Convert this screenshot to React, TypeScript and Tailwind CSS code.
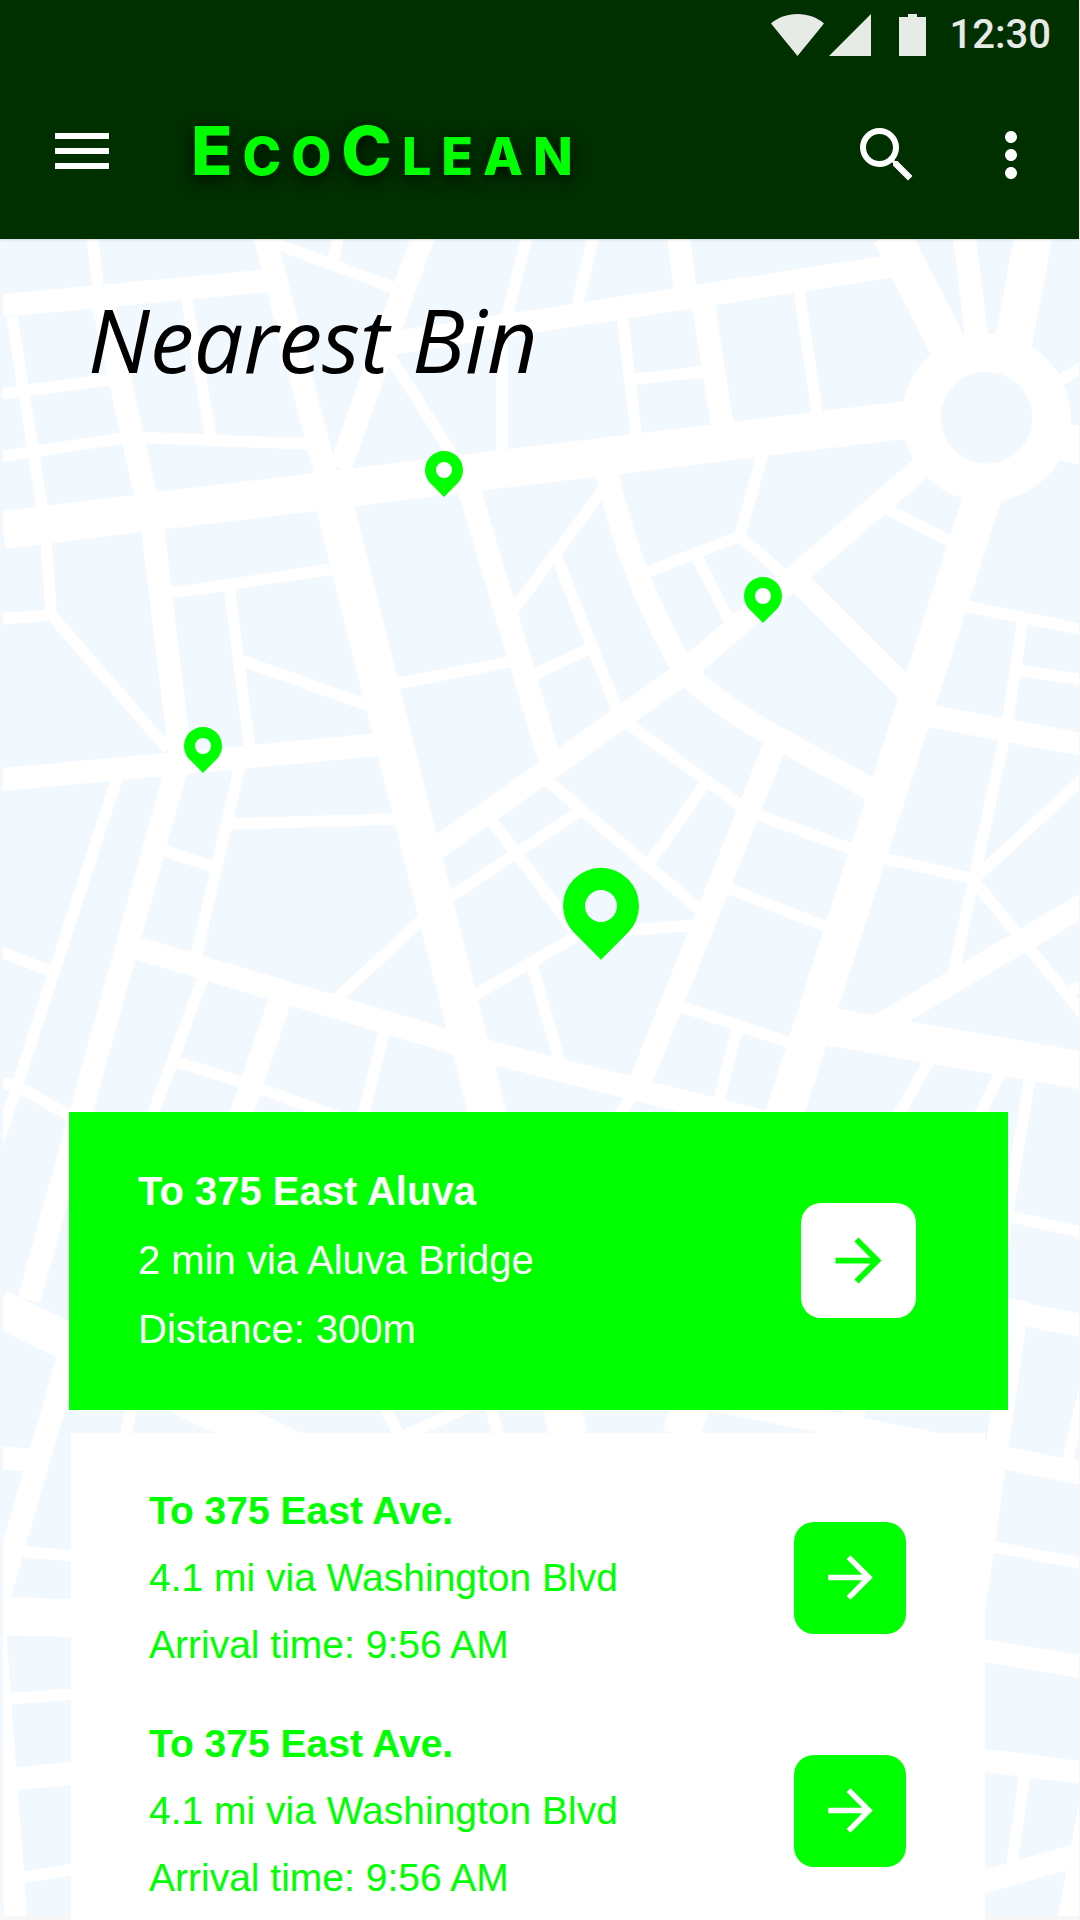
import { MdArrowForward, MdMenu, MdMoreVert, MdSearch } from "react-icons/md";

const wideRoads = [
  "M3 530L905 420L986 410",
  "M986 428L1085 446",
  "M331 490L336 511L487 1112L569 1436",
  "M891 234L950 350L986 417",
  "M1034 234L1012 350L986 417",
  "M988 480L681 1436",
  "M820 1025L1085 1071",
  "M-2 1308L310 1458",
  "M-5 1616L75 1618",
];

const mediumRoads = [
  "M-2 306L275 280",
  "M264 234L312 420L331 495",
  "M100 290L150 515L153 531L180 755L29 1300",
  "M69 1355L-1 1597",
  "M-3 1458L38 1460",
  "M-6 1590L-5 1636L16 1920",
  "M5 1780L75 1773",
  "M424 234L340 468",
  "M380 345L900 265",
  "M678 234L686 297",
  "M702 295L723 430",
  "M964 234L980 365",
  "M-2 780L385 744",
  "M130 946L449 1041L540 1065L800 1131",
  "M282 994L238 1124",
  "M430 853L680 676L700 658L935 456",
  "M465 475L552 768",
  "M606 466L610 486Q634 585 684 670Q705 695 763 730L876 792",
  "M800 583L908 691",
  "M920 714L1085 745",
  "M1088 902L870 1031",
  "M777 740L638 1088",
  "M1000 1310L1085 1326",
  "M1018 1300L973 1616",
  "M700 1397L1085 1474",
  "M855 1400L851 1430",
  "M980 1650L1085 1667",
  "M980 1760L1085 1773",
  "M980 1883L1088 1852",
  "M1094 1785L1069 1920",
];

const thinRoads = [
  "M92 234L99 295",
  "M12 317L42 507",
  "M44 510L51 613",
  "M-2 619L51 615L168 749",
  "M-2 394L115 379",
  "M-2 457L130 437L310 444",
  "M186 295L211 437",
  "M258 237L400 290",
  "M339 234L332 265",
  "M528 234L506 320",
  "M502 335L502 460",
  "M594 234L577 306",
  "M390 357L458 463",
  "M622 313L637 442",
  "M628 380L710 371",
  "M798 285L818 418",
  "M1050 386L1085 366",
  "M165 594L340 568",
  "M229 585L250 750",
  "M240 660L370 706",
  "M118 775L19 1080L-5 1152",
  "M-2 951L50 971",
  "M-2 1083L16 1085L75 1119",
  "M240 765L196 957",
  "M229 824L400 819",
  "M162 850L214 867",
  "M204 975L151 1119",
  "M174 1061L245 1083L338 1117",
  "M385 1029L362 1120",
  "M425 917L335 1000",
  "M395 684L514 661",
  "M603 490L511 613",
  "M556 555L618 712",
  "M591 648L531 676",
  "M763 452L740 536L645 573",
  "M740 536L786 577",
  "M696 555L731 624",
  "M885 508L954 543",
  "M960 605L1085 630",
  "M1023 618L1007 725L974 879L953 974",
  "M1016 670L1085 680",
  "M878 857L974 879L1085 777",
  "M974 881L1030 949L1085 1016",
  "M1068 992L1085 984",
  "M750 812L857 851",
  "M722 886L832 929",
  "M676 1005L794 1044",
  "M738 1027L718 1104",
  "M634 1092L616 1121",
  "M624 721L747 810",
  "M705 784L648 865",
  "M543 777L705 914",
  "M489 817L580 938",
  "M446 900L582 810",
  "M470 998L580 934L697 925",
  "M532 965L560 1062",
  "M932 1056L895 1121",
  "M1001 1071L977 1120",
  "M1030 1077L1000 1260",
  "M1000 1214L1085 1233",
  "M1087 1379L1067 1463",
  "M132 1405L125 1438",
  "M382 1401L400 1438L472 1405",
  "M490 1405L499 1438",
  "M15 1551L75 1556",
  "M5 1699L75 1694",
  "M15 1879L75 1869",
  "M983 1545L1085 1564",
  "M1025 1773L1011 1870",
];

const pins = [
  { x: 444, y: 470, scale: 1 },
  { x: 763, y: 596, scale: 1 },
  { x: 203, y: 746, scale: 1 },
  { x: 601, y: 906, scale: 2 },
];

function CityMap() {
  return (
    <svg
      className="absolute inset-0 h-full w-full"
      viewBox="0 239 1079 1681"
      preserveAspectRatio="xMidYMin slice"
      role="img"
      aria-label="Map of nearby bins"
    >
      <clipPath id="street-area">
        <rect x="3" y="230" width="1076" height="1686" />
      </clipPath>
      <rect x="0" y="230" width="1078" height="1686" fill="#f1f8fe" />
      <g clipPath="url(#street-area)" fill="none" stroke="#ffffff" strokeLinejoin="round">
        <path d={wideRoads.join("")} strokeWidth="38" />
        <path d={mediumRoads.join("")} strokeWidth="23" />
        <path d={thinRoads.join("")} strokeWidth="11.5" />
        <circle cx="986.5" cy="417.7" r="65" fill="#f1f8fe" strokeWidth="38.5" />
      </g>
      {pins.map((pin) => (
        <path
          key={`${pin.x}-${pin.y}`}
          transform={`translate(${pin.x} ${pin.y}) scale(${pin.scale})`}
          fill="#00ff00"
          fillRule="evenodd"
          d="M-13.4 13.4L0 26.9L13.4 13.4A19 19 0 1 0 -13.4 13.4ZM0 -8A8 8 0 1 1 0 8A8 8 0 1 1 0 -8Z"
        />
      ))}
    </svg>
  );
}

function StatusBar() {
  return (
    <div className="flex h-[70px] items-center justify-end pr-7 text-[#e6ebe6]">
      <svg className="h-[42px] w-[53px]" viewBox="0 0 53 42" fill="currentColor" aria-hidden="true">
        <path d="M26.5 42L0 9.5C7 3.500 16 0 26.500 0S46 3.500 53 9.500Z" />
      </svg>
      <svg className="ml-[5px] h-[42px] w-[42px]" viewBox="0 0 42 42" fill="currentColor" aria-hidden="true">
        <path d="M42 0V42H0Z" />
      </svg>
      <svg className="ml-7 h-[42px] w-[27px]" viewBox="0 0 27 42" fill="currentColor" aria-hidden="true">
        <path d="M9 0H18V3H27V42H0V3H9Z" />
      </svg>
      <time className="ml-6 font-['Roboto',sans-serif] text-[40px] leading-[48px] font-medium">12:30</time>
    </div>
  );
}

function Header() {
  return (
    <header className="relative z-10 bg-[#002f00] pb-[7px] shadow-sm">
      <StatusBar />
      <div className="flex h-[162px] items-center pr-8 pl-[46px] text-white">
        <button type="button" aria-label="Menu">
          <MdMenu className="size-[72px]" />
        </button>
        <h1 className="ml-[73px] flex-1 pt-1 font-['Inter',sans-serif] text-[68px] leading-[80px] font-extrabold tracking-[10px] text-[#00ff00] [text-shadow:0_4px_16px_rgb(0_0_0/0.8)]">
          E<span className="text-[52px]">CO</span>C<span className="text-[52px]">LEAN</span>
        </h1>
        <div className="flex gap-[52px] pt-2">
          <button type="button" aria-label="Search">
            <MdSearch className="size-[72px]" />
          </button>
          <button type="button" aria-label="More options">
            <MdMoreVert className="size-[72px]" />
          </button>
        </div>
      </div>
    </header>
  );
}

const routes = [
  { id: 1, title: "To 375 East Ave.", via: "4.1 mi via Washington Blvd", detail: "Arrival time: 9:56 AM" },
  { id: 2, title: "To 375 East Ave.", via: "4.1 mi via Washington Blvd", detail: "Arrival time: 9:56 AM" },
];

export default function App() {
  return (
    <div className="flex min-h-screen flex-col bg-[#f7f7f7] pr-px font-['Liberation_Sans',Arial,sans-serif]">
      <Header />
      <main className="relative flex flex-1 flex-col">
        <CityMap />
        <div className="relative min-h-[873px] pt-[48px] pl-[88px]">
          <h2 className="font-['Open_Sans',sans-serif] text-[88px] leading-[104px] font-medium text-black italic">Nearest Bin</h2>
        </div>

        <section className="relative mr-[71px] ml-[69px] flex items-center justify-between bg-[#00ff00] pt-[45px] pr-[92px] pb-[46px] pl-[69px] text-[40px] leading-[69px] text-white">
          <div>
            <h3 className="font-bold">To 375 East Aluva</h3>
            <p>2 min via Aluva Bridge</p>
            <p>Distance: 300m</p>
          </div>
          <button
            type="button"
            aria-label="Go to 375 East Aluva"
            className="flex size-[115px] items-center justify-center rounded-[20px] bg-white text-[#00ff00]"
          >
            <MdArrowForward className="size-[69px]" />
          </button>
        </section>

        <ul className="relative mt-[23px] mr-[94px] ml-[71px] flex flex-1 flex-col gap-8 bg-white pt-[44px] pr-[79px] pb-[8px] pl-[78px] text-[39px] leading-[67px] text-[#00ff00]">
          {routes.map((route) => (
            <li key={route.id} className="flex items-center justify-between">
              <div>
                <h3 className="font-bold">{route.title}</h3>
                <p>{route.via}</p>
                <p>{route.detail}</p>
              </div>
              <button
                type="button"
                aria-label={`Go ${route.title}`}
                className="flex size-[112px] items-center justify-center rounded-[20px] bg-[#00ff00] text-white"
              >
                <MdArrowForward className="size-[67px]" />
              </button>
            </li>
          ))}
        </ul>
      </main>
    </div>
  );
}
